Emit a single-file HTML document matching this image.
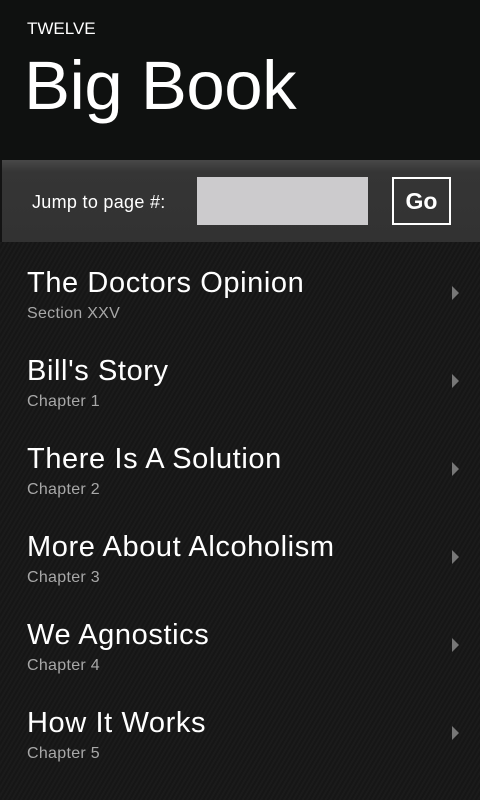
<!DOCTYPE html>
<html><head><style>
body{margin:0;width:480px;height:800px;background:#131313;font-family:"Liberation Sans",sans-serif;color:#fff;position:relative;overflow:hidden}
.hdr{position:absolute;left:0;top:0;width:480px;height:160px;background:#0f1110}
.t1{position:absolute;left:27px;top:19px;font-size:17px}
.t2{position:absolute;left:24px;top:46px;font-size:69px;letter-spacing:-0.5px}
.bar{position:absolute;left:2px;top:160px;width:478px;height:82px;background:linear-gradient(#484848,#353535 12px,#323232)}
.lbl{position:absolute;left:32px;top:192px;font-size:18px;letter-spacing:0.3px}
.inp{position:absolute;left:197px;top:177px;width:171px;height:48px;background:#cccbcd}
.go{position:absolute;left:392px;top:177px;width:55px;height:44px;border:2px solid #fff;font-size:23px;font-weight:bold;text-align:center;line-height:44px}
.list{position:absolute;left:0;top:242px;width:480px;height:558px;background:repeating-linear-gradient(120deg,#1b1b1b 0 2px,#161616 2px 4px)}
.it{position:absolute;left:27px}
.it .a{font-size:29px;line-height:34px;letter-spacing:0.6px}
.it .b{font-size:16px;color:#a8a8a8;margin-top:5px;letter-spacing:0.3px}
.ar{position:absolute;left:452px;width:0;height:0;border-left:7px solid #777;border-top:7px solid transparent;border-bottom:7px solid transparent}
</style></head><body>
<div class="hdr"></div>
<div class="t1">TWELVE</div>
<div class="t2">Big Book</div>
<div class="bar"></div>
<div class="lbl">Jump to page #:</div>
<div class="inp"></div>
<div class="go">Go</div>
<div class="list"></div>
<div class="it" style="top:266px"><div class="a">The Doctors Opinion</div><div class="b">Section XXV</div></div><div class="ar" style="top:286px"></div>
<div class="it" style="top:354px"><div class="a">Bill's Story</div><div class="b">Chapter 1</div></div><div class="ar" style="top:374px"></div>
<div class="it" style="top:442px"><div class="a">There Is A Solution</div><div class="b">Chapter 2</div></div><div class="ar" style="top:462px"></div>
<div class="it" style="top:530px"><div class="a">More About Alcoholism</div><div class="b">Chapter 3</div></div><div class="ar" style="top:550px"></div>
<div class="it" style="top:618px"><div class="a">We Agnostics</div><div class="b">Chapter 4</div></div><div class="ar" style="top:638px"></div>
<div class="it" style="top:706px"><div class="a">How It Works</div><div class="b">Chapter 5</div></div><div class="ar" style="top:726px"></div>
</body></html>
